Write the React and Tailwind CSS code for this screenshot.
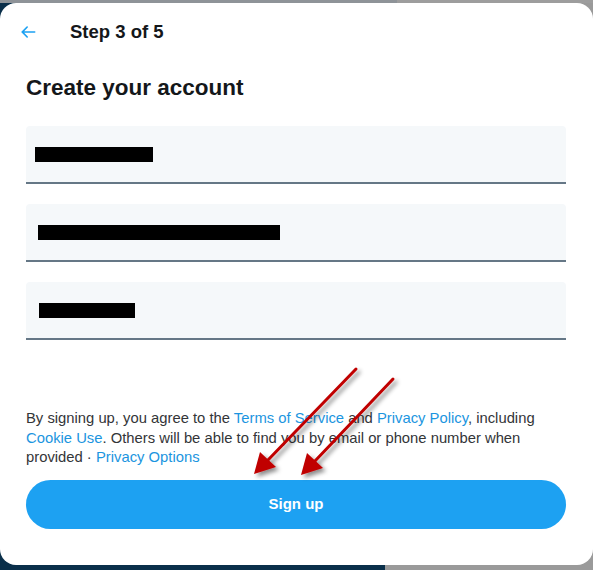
function BackArrow() {
  return (
    <svg aria-hidden="true" className="h-[20px] w-[20px]" viewBox="0 0 24 24" fill="#1da1f2">
      <path d="M20 11H7.414l4.293-4.293a1 1 0 0 0-1.414-1.414l-6 6a1 1 0 0 0 0 1.414l6 6a1 1 0 0 0 1.414-1.414L7.414 13H20a1 1 0 1 0 0-2z" />
    </svg>
  );
}

function RedArrows() {
  return (
    <svg
      aria-hidden="true"
      className="pointer-events-none absolute left-0 top-0 h-[570px] w-[593px]"
      viewBox="0 0 593 570"
    >
      <defs>
        <filter id="shadow" x="-20%" y="-20%" width="140%" height="140%">
          <feDropShadow dx="3" dy="3" stdDeviation="2" floodColor="#000" floodOpacity="0.45" />
        </filter>
      </defs>
      <g filter="url(#shadow)" stroke="#c00000" strokeWidth="3" fill="#c00000" strokeLinecap="round">
        <line x1="356" y1="369" x2="268" y2="460" />
        <polygon points="254,474 260,452 276,467" stroke="none" />
        <line x1="393" y1="379" x2="315" y2="461" />
        <polygon points="301,475 307,453 323,468" stroke="none" />
      </g>
    </svg>
  );
}

function Field({ barWidth, barLeft }) {
  return (
    <div className="relative h-[58px] rounded-t-[4px] border-b-2 border-[#657786] bg-[#f5f8fa]">
      <div
        className="absolute top-[21px] h-[15px] bg-black"
        style={{ width: barWidth, left: barLeft }}
      />
    </div>
  );
}

export default function App() {
  return (
    <div
      className="relative flex h-[570px] w-[593px] flex-col overflow-hidden bg-[linear-gradient(to_right,#0a2f4a_0%,#0a2f4a_65%,#9a9a9a_65%,#9a9a9a_100%)] font-['Liberation_Sans',Arial,sans-serif]"
    >
      <div className="h-[3px] bg-[linear-gradient(to_right,#8e9398_0%,#8e9398_67%,#9d9d9d_67%)]" />
      <div className="flex h-[562px] flex-col rounded-[16px] bg-white pl-[26px] pr-[27px]">
        <div className="flex h-[56px] items-center pt-[1px]">
          <div className="-ml-[8px] mr-[32px] flex w-[20px] items-center">
            <BackArrow />
          </div>
          <h2 className="text-[18.5px] font-bold text-[#14171a]">Step 3 of 5</h2>
        </div>

        <h1 className="mt-[14px] text-[22.5px] font-bold leading-[30px] text-[#14171a]">
          Create your account
        </h1>

        <div className="mt-[23px] flex flex-col gap-[20px]">
          <Field barWidth={118} barLeft={9} />
          <Field barWidth={242} barLeft={12} />
          <Field barWidth={96} barLeft={13} />
        </div>

        <p className="mt-[69px] text-[14.8px] leading-[19.5px] text-[#333538]">
          By signing up, you agree to the{" "}
          <span className="text-[#1b95e0]">Terms of Service</span> and{" "}
          <span className="text-[#1b95e0]">Privacy Policy</span>, including
          <br />
          <span className="text-[#1b95e0]">Cookie Use</span>. Others will be able to find you by email or phone number when
          <br />
          provided · <span className="text-[#1b95e0]">Privacy Options</span>
        </p>

        <button
          type="button"
          className="mt-[12px] h-[49px] w-full rounded-full bg-[#1da1f2] text-[15px] font-bold text-white"
        >
          Sign up
        </button>
      </div>
      <RedArrows />
    </div>
  );
}
